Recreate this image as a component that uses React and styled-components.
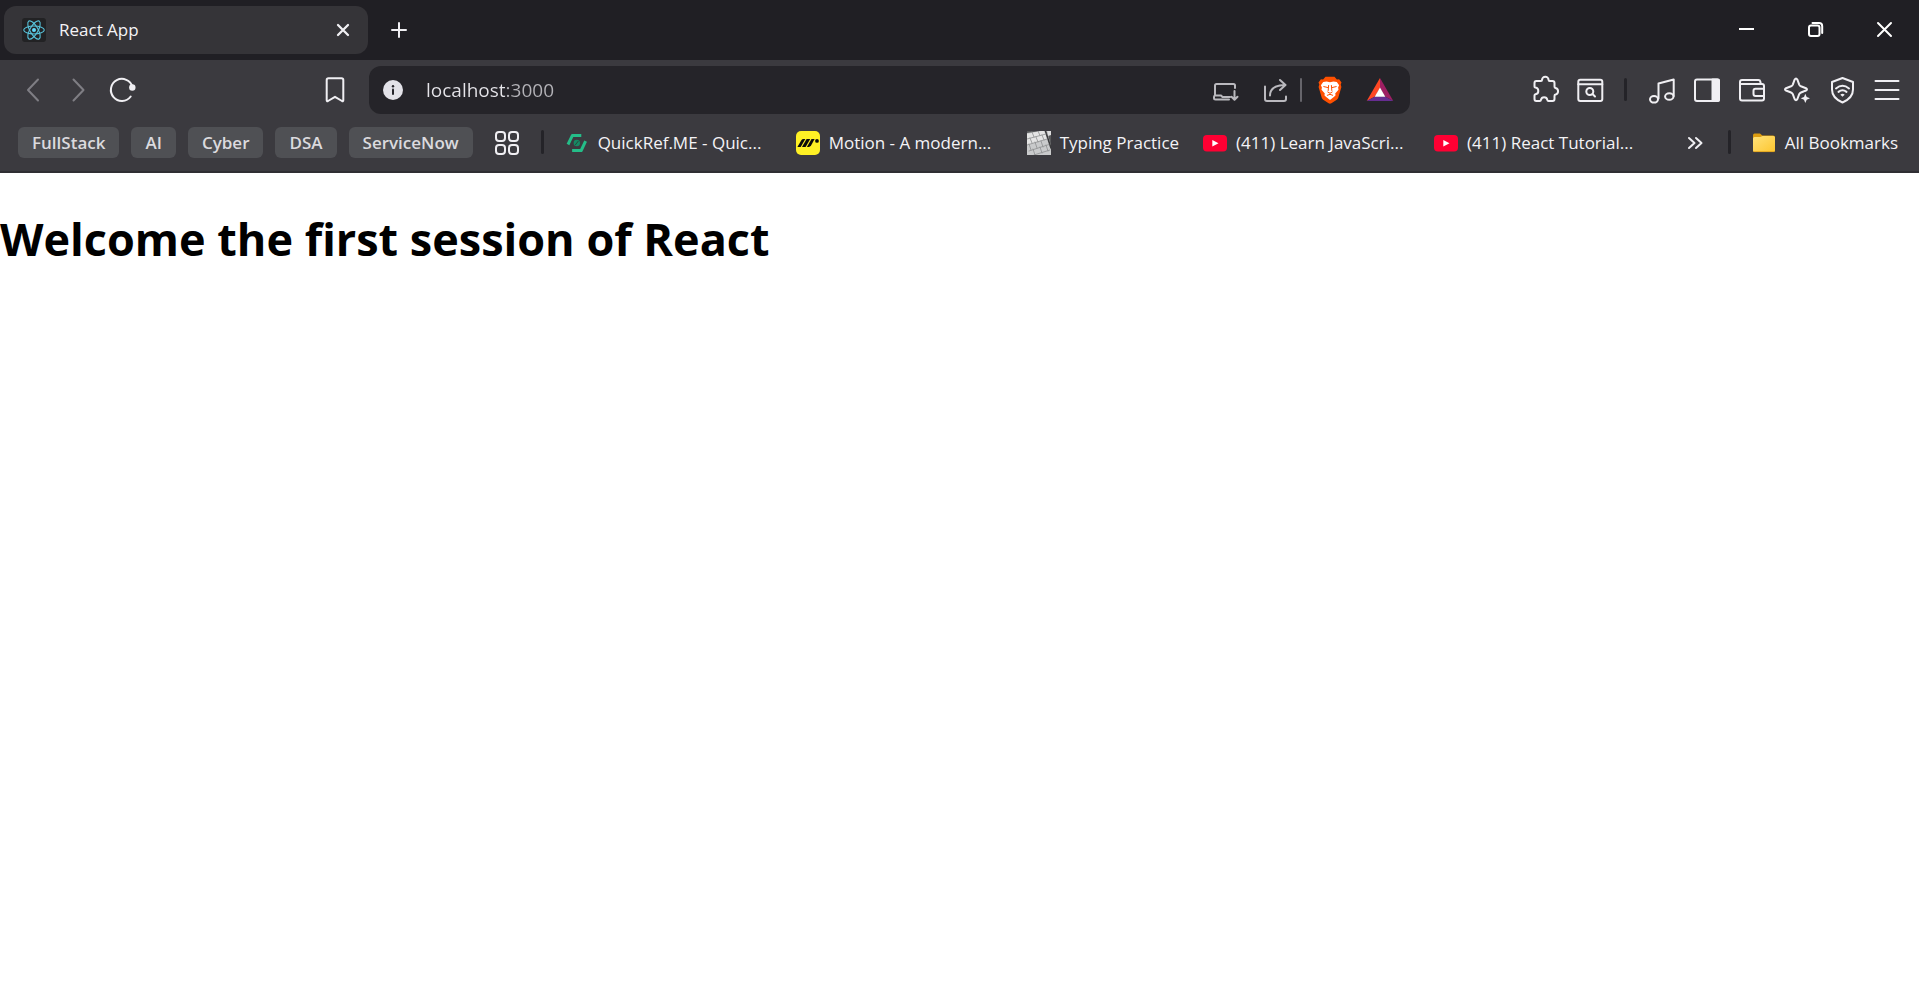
import React from "react";
import styled, { createGlobalStyle } from "styled-components";

const colors = {
  strip: "#201f24",
  tab: "#353438",
  toolbar: "#3b3a3f",
  field: "#252429",
  chip: "#4f5054",
  divider: "#242328",
  edge: "#2f2e33",
  icon: "#f0eff3",
  muted: "#7f7e84",
  soft: "#bab9be",
  text: "#f4f3f6",
};

const GlobalStyle = createGlobalStyle`
  * { box-sizing: border-box; }
  body {
    margin: 0;
    background: #ffffff;
    font-family: "Open Sans", "Noto Sans", sans-serif;
  }
  button, input { font: inherit; }
`;

const TabStrip = styled.header`
  display: flex;
  align-items: center;
  height: 60px;
  padding-left: 4px;
  background: ${colors.strip};
`;

const Tab = styled.div`
  display: flex;
  align-items: center;
  gap: 13px;
  width: 364px;
  height: 48px;
  padding: 0 11px 0 18px;
  border-radius: 12px;
  background: ${colors.tab};
  color: ${colors.text};
`;

const TabTitle = styled.span`
  flex: 1;
  font-size: 17px;
  line-height: 24px;
`;

const PlainButton = styled.button`
  display: flex;
  align-items: center;
  justify-content: center;
  flex: none;
  width: ${(p) => p.$width}px;
  height: ${(p) => p.$height}px;
  padding: 0;
  border: 0;
  background: none;
  color: ${(p) => p.$color || colors.icon};
`;

const NewTab = styled(PlainButton)`
  margin-left: 13px;
`;

const WindowControls = styled.div`
  display: flex;
  align-self: flex-start;
  margin-left: auto;
`;

const NavBar = styled.nav`
  display: flex;
  align-items: flex-start;
  height: 60px;
  padding: 6px 10px;
  background: ${colors.toolbar};
`;

const Group = styled.div`
  display: flex;
  align-items: center;
  flex: none;
`;

const Spacer = styled.div`
  flex: ${(p) => p.$grow} 1 0;
`;

const AddressBar = styled.div`
  display: flex;
  align-items: center;
  flex: 0 1 1041px;
  min-width: 0;
  height: 48px;
  margin-left: 12px;
  padding: 0 5px 0 10px;
  border-radius: 12px;
  background: ${colors.field};
`;

const AddressInput = styled.input`
  flex: 1;
  min-width: 0;
  height: 32px;
  margin-left: 19px;
  padding: 0;
  border: 0;
  outline: 0;
  font-size: 19px;
  line-height: 32px;
  color: transparent;
  caret-color: ${colors.text};
  background: linear-gradient(90deg, #e6e5ea 80px, #b4b3b8 80px);
  background-clip: text;
  -webkit-background-clip: text;
`;

const Divider = styled.span`
  flex: none;
  width: ${(p) => p.$width || 3}px;
  height: ${(p) => p.$height || 24}px;
  margin: ${(p) => p.$margin};
  border-radius: 2px;
  background: ${(p) => p.$color || colors.divider};
`;

const BookmarkBar = styled.nav`
  display: flex;
  align-items: flex-start;
  height: 53px;
  padding: 7px 21px 0 18px;
  border-bottom: 2px solid ${colors.edge};
  background: ${colors.toolbar};
`;

const Chips = styled.div`
  display: flex;
  gap: 12px;
`;

const Chip = styled.button`
  height: 31px;
  padding: 0 14px;
  border: 0;
  border-radius: 6px;
  background: ${colors.chip};
  color: #dbdade;
  font-size: 17px;
  font-weight: 600;
  line-height: 31px;
`;

const BookmarkList = styled.div`
  display: flex;
  gap: 24px;
`;

const Bookmark = styled.a`
  display: flex;
  align-items: center;
  gap: 9px;
  width: ${(p) => (p.$full ? "207px" : "auto")};
  height: 32px;
  color: ${colors.text};
  font-size: 17px;
  line-height: 32px;
  text-decoration: none;
  white-space: nowrap;
`;

const Page = styled.main`
  padding: 34px 0;
  background: #ffffff;
`;

const Heading = styled.h1`
  margin: 0;
  color: #000000;
  font-size: 45px;
  font-weight: 700;
  line-height: 64px;
`;

const Icon = ({ size = 29, sw = 2, children }) => (
  <svg
    width={size}
    height={size}
    viewBox={`0 0 ${size} ${size}`}
    fill="none"
    stroke="currentColor"
    strokeWidth={sw}
    strokeLinecap="round"
    strokeLinejoin="round"
    aria-hidden="true"
  >
    {children}
  </svg>
);

const ReactLogo = () => (
  <Icon size={24} sw={1.1}>
    <rect width="24" height="24" rx="3" fill="#222224" stroke="none" />
    <g stroke="#58c4dc">
      <ellipse cx="12" cy="12" rx="10.3" ry="4" />
      <ellipse cx="12" cy="12" rx="10.3" ry="4" transform="rotate(60 12 12)" />
      <ellipse cx="12" cy="12" rx="10.3" ry="4" transform="rotate(120 12 12)" />
    </g>
    <circle cx="12" cy="12" r="2" fill="#61dafb" stroke="none" />
  </Icon>
);

const BraveLogo = () => (
  <Icon size={28}>
    <path
      d="M9.5 .8h9l2.4 2.6 2.2-.2 2.4 3.2-.8 2.200.7 2.300-3 10.300c-.4 1.400-1 2-2 2.800l-5 3.200c-1 .6-1.900.6-2.800 0l-5-3.200c-1-.8-1.600-1.400-2-2.800L2.600 10.900l.7-2.300-.8-2.200 2.400-3.200 2.200.2z"
      fill="#ff5000"
      stroke="none"
    />
    <path
      d="M14 6.200 17.400 5.400l3.400.6 2.300 3.200-1 2.400.4 2.200-3.300 3.700.4 1.700-1.500 1.500-4.100 3.200-4.100-3.200-1.500-1.500.4-1.700-3.300-3.700.4-2.200-1-2.400L7.200 6l3.400-.6z"
      fill="#ffffff"
      stroke="none"
    />
    <path
      d="m7.800 10.600 3.800.9M20.200 10.600l-3.800.9M12.600 9.500 12.200 14.500M15.400 9.500l.4 5M11.800 16 14 17.300l2.200-1.300M11.300 19.300l2.700-1 2.700 1"
      stroke="#ff5000"
      strokeWidth="1"
    />
  </Icon>
);

const BatLogo = () => (
  <Icon size={28}>
    <g stroke="none">
      <path d="M14 2 .7 25 9 20.5 14 12z" fill="#ff4724" />
      <path d="M14 2v10l5 8.5 8.3 4.5z" fill="#9e1f63" />
      <path d="M.7 25h26.6L19 20.5H9z" fill="#662d91" />
      <path d="m14 11.5-5.3 9.2h10.6z" fill="#ffffff" />
    </g>
  </Icon>
);

const QuickRefLogo = () => (
  <Icon size={24} sw={3}>
    <g stroke="#24bd88" strokeLinecap="butt">
      <path d="M3 13.5 7.3 4.6h9" />
      <path d="M20.6 10.2l-4.4 9.3H7.1" />
    </g>
    <circle cx="11.8" cy="12" r="3.2" fill="#168964" stroke="none" />
    <path d="m10.4 13.8 2.8-3.6" stroke="#29483e" strokeWidth="1" />
  </Icon>
);

const MotionLogo = () => (
  <Icon size={24}>
    <rect width="24" height="24" rx="5" fill="#fff125" stroke="none" />
    <g fill="#0b0b0b" stroke="none">
      <path d="M1.4 16 5.2 9.4Q6 8 7.6 8H9.3L4.7 16z" />
      <path d="M6 16 10.6 8H14.2L9.6 16z" />
      <path d="M10.9 16 15.5 8H18.6L15.2 14.3Q14.2 16 12.6 16z" />
      <circle cx="21" cy="9.9" r="1.9" />
    </g>
  </Icon>
);

const KeyboardPhoto = () => (
  <Icon size={24} sw={0.8}>
    <rect width="24" height="24" fill="#57585a" stroke="none" />
    <path d="M0 2 14 0h6l4 15v9H0z" fill="#c9cacb" stroke="none" />
    <path d="M0 3 14 0h3l3 8-20 6z" fill="#e4e4e4" stroke="none" />
    <path d="M20 0h4v4l-3 1z" fill="#dededf" stroke="none" />
    <path d="m18.5 0 5.5 17" stroke="#39393b" strokeWidth="1.6" />
    <path
      d="M0 8 19 3M0 14l20-6M2 20l20-6.500M7 24l16-5M5 1l2 5M11 0l2 4.500M3 7l2 5M9 6l2 5M15 4l2 5M2 13l2 6M8 11l2 6M14 10l2 6M6 18l2 6M13 16l2 6M19 14l2 6"
      stroke="#8e8f91"
    />
  </Icon>
);

const YouTubeLogo = () => (
  <Icon size={24}>
    <rect y="4" width="24" height="16.500" rx="4" fill="#ff0033" stroke="none" />
    <path d="M9.300 9v6.500l6.200-3.200z" fill="#ffffff" stroke="none" />
  </Icon>
);

const FolderIcon = () => (
  <Icon size={24}>
    <defs>
      <linearGradient id="folder" x1="0" y1="0" x2="1" y2="1">
        <stop offset="0" stopColor="#ffe27a" />
        <stop offset="1" stopColor="#fdc62f" />
      </linearGradient>
    </defs>
    <path d="M1 4.500Q1 2.500 2.500 2.500H8l2.300 2H21q2 0 2 2V19H1z" fill="#dc9c10" stroke="none" />
    <path d="M1 7.500Q1 6 2.500 6H8.500L10.500 5H21.500Q23 5 23 6.500V19.500Q23 21 21.500 21H2.500Q1 21 1 19.500z" fill="url(#folder)" stroke="none" />
    <path d="M2 20.600H22" stroke="#dd9d18" strokeWidth="0.800" />
  </Icon>
);

const bookmarks = [
  { label: "QuickRef.ME - Quic...", Logo: QuickRefLogo, full: true },
  { label: "Motion - A modern...", Logo: MotionLogo, full: true },
  { label: "Typing Practice", Logo: KeyboardPhoto, full: false },
  { label: "(411) Learn JavaScri...", Logo: YouTubeLogo, full: true },
  { label: "(411) React Tutorial...", Logo: YouTubeLogo, full: true },
];

const folders = ["FullStack", "AI", "Cyber", "DSA", "ServiceNow"];

const ToolButton = ({ label, color, children }) => (
  <PlainButton $width={45} $height={47} $color={color} aria-label={label}>
    <Icon>{children}</Icon>
  </PlainButton>
);

const FieldButton = ({ label, children }) => (
  <PlainButton $width={50} $height={48} $color={colors.soft} aria-label={label}>
    {children}
  </PlainButton>
);

const WindowButton = ({ label, children }) => (
  <PlainButton $width={69} $height={59} $color="#ffffff" aria-label={label}>
    <Icon size={17}>{children}</Icon>
  </PlainButton>
);

export default function App() {
  return (
    <>
      <GlobalStyle />
      <TabStrip>
        <Tab>
          <ReactLogo />
          <TabTitle>React App</TabTitle>
          <PlainButton $width={28} $height={28} aria-label="Close tab">
            <Icon size={14} sw={2.3}>
              <path d="M2 2l10 10M12 2 2 12" />
            </Icon>
          </PlainButton>
        </Tab>
        <NewTab $width={36} $height={36} aria-label="New tab">
          <Icon size={18}>
            <path d="M9 2v14M2 9h14" />
          </Icon>
        </NewTab>
        <WindowControls>
          <WindowButton label="Minimize">
            <path d="M2 8h13" strokeLinecap="square" />
          </WindowButton>
          <WindowButton label="Restore">
            <rect x="2" y="4.500" width="10.500" height="10.500" rx="2" />
            <path d="M5.500 2h6.500q3.200 0 3.200 3.200V12" />
          </WindowButton>
          <WindowButton label="Close window">
            <path d="M2 2l13 13M15 2 2 15" />
          </WindowButton>
        </WindowControls>
      </TabStrip>

      <NavBar aria-label="Toolbar">
        <Group>
          <ToolButton label="Back" color={colors.muted}>
            <path d="M20 4.500 10 15l10 10.500" />
          </ToolButton>
          <ToolButton label="Forward" color={colors.muted}>
            <path d="M10.500 4.500 20.500 15 10.500 25.500" />
          </ToolButton>
          <ToolButton label="Reload">
            <path d="M24.500 12A11 11 0 1 0 22.700 21.500" />
            <circle cx="24.300" cy="12.500" r="3.200" fill="currentColor" stroke="none" />
          </ToolButton>
        </Group>
        <Spacer $grow={167} />
        <ToolButton label="Bookmark this page">
          <path d="M6.700 5Q6.700 3.200 8.500 3.200H21.500Q23.300 3.200 23.300 5V25.200Q23.300 26.700 22 26L15 21.800 8 26Q6.700 26.700 6.700 25.200z" />
        </ToolButton>
        <AddressBar>
          <PlainButton $width={28} $height={28} aria-label="Site information">
            <Icon size={20}>
              <circle cx="10" cy="10" r="10" fill="#e3e2e8" stroke="none" />
              <path d="M10 9.500V14" stroke={colors.field} />
              <circle cx="10" cy="6.300" r="1.200" fill={colors.field} stroke="none" />
            </Icon>
          </PlainButton>
          <AddressInput aria-label="Address" defaultValue="localhost:3000" />
          <FieldButton label="Install app">
            <Icon size={28}>
              <path d="M24 12V9.500Q24 8 22.500 8H5.500Q4 8 4 9.500V19.500M4 19.500H10L11.500 21H19M4 19.500Q3 19.500 3 21V22Q3 23.500 4.500 23.500H18M23.500 15v8.500M20.500 20.700l3 3 3-3" />
            </Icon>
          </FieldButton>
          <FieldButton label="Share">
            <Icon size={28}>
              <path d="M4 10.500V23Q4 25 6 25H23Q25 25 25 23V20.500M9 19.500C9 13 13.500 9.300 24 9M19 4l5.500 5-5.500 5" />
            </Icon>
          </FieldButton>
          <Divider $width={2} $margin="0 3px 0 0" $color="#66656b" />
          <FieldButton label="Brave Shields">
            <BraveLogo />
          </FieldButton>
          <FieldButton label="Brave Rewards">
            <BatLogo />
          </FieldButton>
        </AddressBar>
        <Spacer $grow={113} />
        <Group>
          <ToolButton label="Extensions">
            <path d="M5.300 6H10Q11 6 11 5A3.300 3.300 0 0 1 17.600 5Q17.600 6 18.600 6H21.500Q23.500 6 23.500 8V11.500Q23.500 12.800 24.500 13A3.400 3.400 0 0 1 24.500 19.600Q23.500 19.800 23.500 21V24Q23.500 26 21.500 26H17.500Q16.500 26 16.300 24.800A3.200 3.200 0 0 0 10 24.800Q9.800 26 8.800 26H5.300Q3.500 26 3.500 24V20.500Q3.500 19.500 4.500 19.300A3.400 3.400 0 0 0 4.500 12.600Q3.500 12.400 3.500 11.400V8Q3.500 6 5.300 6z" />
          </ToolButton>
          <ToolButton label="Search in page">
            <rect x="2.300" y="4.700" width="24" height="21.300" rx="2" />
            <path d="M2.300 9.300h24M16.500 19l2.500 2.500" />
            <circle cx="13.800" cy="16.500" r="3.500" />
          </ToolButton>
          <Divider $height={23} $margin="0 12px 0 11px" />
          <ToolButton label="Playlist">
            <ellipse cx="7" cy="24.300" rx="4" ry="3.300" />
            <ellipse cx="22.300" cy="21.500" rx="4.200" ry="3.300" />
            <path d="M11.500 23.500V8.500L26.700 4.500V21" />
          </ToolButton>
          <ToolButton label="Sidebar">
            <rect x="3" y="4.500" width="24" height="21.500" rx="2" />
            <path d="M20.500 4.500H26Q27 4.500 27 5.500V25Q27 26 26 26H20.500z" fill="currentColor" />
          </ToolButton>
          <ToolButton label="Wallet">
            <path d="M3 7Q3 5 5 5H21.500Q23 5 23.300 6.500L23.800 9H3zM3 9H25Q27 9 27 11V23.500Q27 25.500 25 25.500H5Q3 25.500 3 23.500zM27 13.700H18.500Q16.500 13.700 16.500 15.700V19Q16.500 21 18.500 21H27" />
          </ToolButton>
          <ToolButton label="Leo AI">
            <path d="M12.600 4.700Q14 2.300 15.400 4.700L17.200 9.600Q17.700 10.800 18.900 11.300L24 13.200Q26 14.500 24 15.500L19 17.500Q17.700 18 17.200 19.200L15.400 24Q14 26.500 12.600 24L10.800 19.200Q10.300 18 9 17.500L4 15.500Q2 14.500 4 13.200L9.100 11.300Q10.300 10.800 10.800 9.600z" />
            <path
              d="M23.300 18.700 24.700 22 28 23.300 24.700 24.700 23.300 28 22 24.700 18.700 23.300 22 22z"
              fill="currentColor"
              stroke={colors.toolbar}
              strokeWidth="3"
              paintOrder="stroke"
            />
          </ToolButton>
          <ToolButton label="VPN">
            <path d="M15.500 3 26 7V14.500Q26 23 15.500 27.500 5 23 5 14.500V7z" />
            <path d="M9 13.400Q15.500 8 22 13.400M11.500 16.900Q15.500 13.700 19.500 16.900" />
            <path d="M13.300 19.700Q15.500 18 17.700 19.700L15.500 21.700z" fill="currentColor" stroke="none" />
          </ToolButton>
          <ToolButton label="Menu">
            <path d="M3.500 6h23M3.500 15h23M3.500 24h23" />
          </ToolButton>
        </Group>
      </NavBar>

      <BookmarkBar aria-label="Bookmarks">
        <Chips>
          {folders.map((name) => (
            <Chip key={name}>{name}</Chip>
          ))}
        </Chips>
        <PlainButton $width={68} $height={32} aria-label="Apps">
          <Icon size={26}>
            <rect x="2" y="2" width="9" height="9" rx="3" />
            <rect x="15" y="2" width="9" height="9" rx="3" />
            <rect x="2" y="15" width="9" height="9" rx="3" />
            <rect x="15" y="15" width="9" height="9" rx="3" />
          </Icon>
        </PlainButton>
        <Divider $margin="3px 21px 0 0" />
        <BookmarkList>
          {bookmarks.map(({ label, Logo, full }) => (
            <Bookmark key={label} href="#" $full={full}>
              <Logo />
              {label}
            </Bookmark>
          ))}
        </BookmarkList>
        <Spacer $grow={1} />
        <PlainButton $width={32} $height={32} aria-label="More bookmarks">
          <Icon size={18}>
            <path d="M3 4l5.500 5L3 14M10 4l5.500 5-5.500 5" />
          </Icon>
        </PlainButton>
        <Divider $margin="3px 21px 0 17px" />
        <Bookmark href="#">
          <FolderIcon />
          All Bookmarks
        </Bookmark>
      </BookmarkBar>

      <Page>
        <Heading>Welcome the first session of React</Heading>
      </Page>
    </>
  );
}
